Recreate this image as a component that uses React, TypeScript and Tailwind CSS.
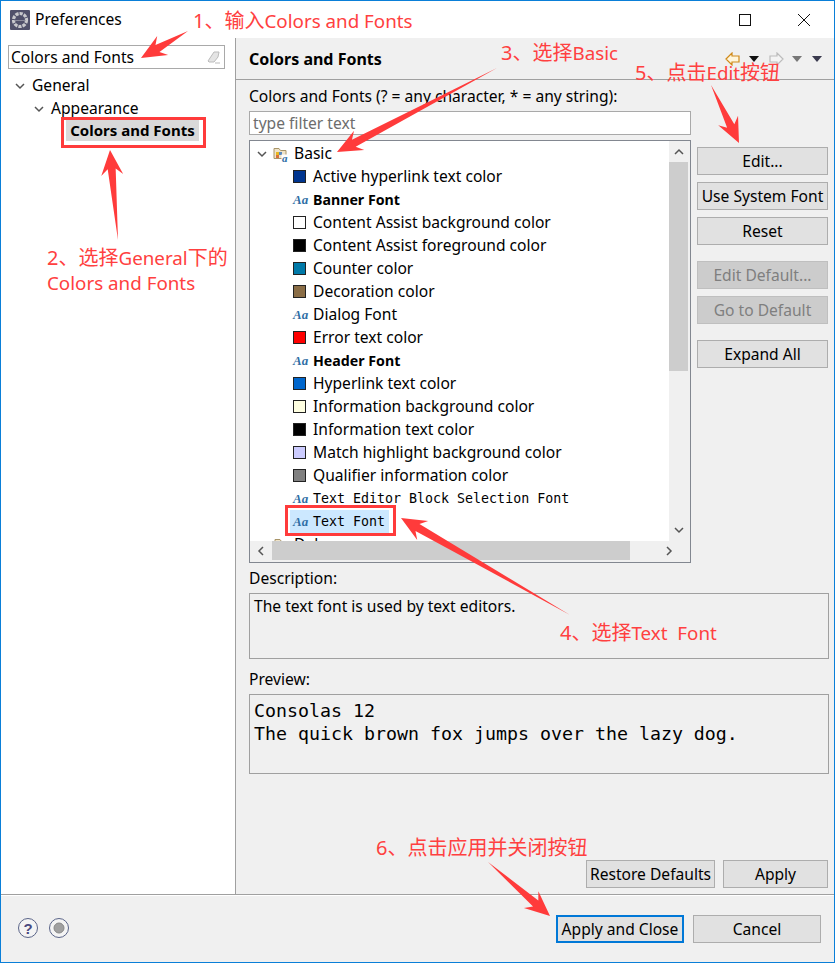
import React from 'react';

const ui = { fontFamily: '"Noto Sans", "Noto Sans CJK SC", sans-serif' };
const mono = { fontFamily: '"DejaVu Sans Mono", monospace' };

// tapered red arrow used by the tutorial annotations
const arrowPoints = (x1: number, y1: number, x2: number, y2: number) => {
  const len = Math.hypot(x2 - x1, y2 - y1);
  const ux = (x2 - x1) / len;
  const uy = (y2 - y1) / len;
  const nx = -uy;
  const ny = ux;
  const at = (back: number, side: number) =>
    `${x2 - ux * back + nx * side},${y2 - uy * back + ny * side}`;
  return [`${x1},${y1}`, at(19, 4), at(25, 11), `${x2},${y2}`, at(25, -11), at(19, -4)].join(' ');
};

const arrows = [
  [188, 31, 141, 58],
  [118, 240, 110, 150],
  [497, 68, 337, 152],
  [570, 615, 401, 518],
  [711, 85, 739, 143],
  [488, 862, 550, 916],
];

const AaIcon = () => (
  <span
    className="w-[15px] shrink-0 whitespace-nowrap text-[13px] leading-none font-bold italic text-[#2f6ea5]"
    style={{ fontFamily: '"Liberation Serif", serif' }}
  >
    Aa
  </span>
);

const Swatch = ({ color }: { color: string }) => (
  <span className="mr-[2px] h-[13px] w-[13px] shrink-0 border border-[#222]" style={{ backgroundColor: color }} />
);

const Chevron = ({ size = 10 }: { size?: number }) => (
  <svg width={size} height={size} viewBox="0 0 10 10" className="shrink-0">
    <path d="M1 3l4 4 4-4" fill="none" stroke="#555" strokeWidth="1.5" />
  </svg>
);

const rows: { label: string; color?: string; bold?: boolean }[] = [
  { label: 'Active hyperlink text color', color: '#00358f' },
  { label: 'Banner Font', bold: true },
  { label: 'Content Assist background color', color: '#ffffff' },
  { label: 'Content Assist foreground color', color: '#000000' },
  { label: 'Counter color', color: '#0079a8' },
  { label: 'Decoration color', color: '#8a6d46' },
  { label: 'Dialog Font' },
  { label: 'Error text color', color: '#ff0000' },
  { label: 'Header Font', bold: true },
  { label: 'Hyperlink text color', color: '#0066cc' },
  { label: 'Information background color', color: '#ffffe1' },
  { label: 'Information text color', color: '#000000' },
  { label: 'Match highlight background color', color: '#ccccff' },
  { label: 'Qualifier information color', color: '#808080' },
];

const Btn = ({ children, disabled, className = '' }: { children: React.ReactNode; disabled?: boolean; className?: string }) => (
  <div
    className={`flex h-[28px] items-center justify-center whitespace-nowrap border pt-[2px] ${
      disabled ? 'border-[#bfbfbf] bg-[#cccccc] text-[#7f7f7f]' : 'border-[#adadad] bg-[#e1e1e1] text-black'
    } ${className}`}
  >
    {children}
  </div>
);

const FolderIcon = () => (
  <svg width="17" height="16" viewBox="0 0 17 16" className="shrink-0">
    <path d="M1 2.5h5l1.5 2H13v8H1z" fill="#efe3c8" stroke="#a89468" />
    <rect x="3" y="6" width="3" height="3" fill="#e8b820" />
    <rect x="6" y="6" width="3" height="3" fill="#5a8ac0" />
    <rect x="3" y="9" width="3" height="3" fill="#d8703a" />
    <rect x="8.5" y="8.5" width="8" height="7" fill="#ffffff" />
    <text x="9" y="15.5" fontSize="11" fontWeight="bold" fontStyle="italic" fill="#2f6ea5" fontFamily="Liberation Serif">a</text>
  </svg>
);

const Label = ({ className, children }: { className: string; children: React.ReactNode }) => (
  <div className={`absolute whitespace-pre text-[20px] leading-[26px] text-[#ff4040] ${className}`}>{children}</div>
);

const Latin = ({ children }: { children: React.ReactNode }) => <span className="text-[18.8px]">{children}</span>;

export default function App() {
  return (
    <div className="relative flex h-[963px] w-[835px] flex-col overflow-hidden border border-[#0a7fd8] bg-white text-[15.6px] text-black" style={ui}>
      {/* title bar */}
      <div className="flex h-[37px] shrink-0 items-center bg-white pl-[9px]">
        <svg width="20" height="20" viewBox="0 0 20 20">
          <rect width="20" height="20" rx="1" fill="#50506a" />
          <circle cx="10" cy="10" r="6.5" fill="none" stroke="#c8c8cc" strokeWidth="3.2" strokeDasharray="3.2 1" />
          <path d="M4.5 10.5h11" stroke="#8a8a9a" strokeWidth="1" />
        </svg>
        <span className="ml-[5px]">Preferences</span>
        <svg width="14" height="14" viewBox="0 0 14 14" className="ml-auto mr-[45px]">
          <rect x="1.5" y="1.5" width="11" height="11" fill="none" stroke="#111" strokeWidth="1" />
        </svg>
        <svg width="14" height="14" viewBox="0 0 14 14" className="mr-[23px]">
          <path d="M1 1l12 12M13 1L1 13" stroke="#111" strokeWidth="1" />
        </svg>
      </div>

      <div className="flex min-h-0 flex-1">
        {/* left tree */}
        <div className="w-[235px] shrink-0 border-r border-[#a0a0a0] bg-white pt-[7px]">
          <div className="ml-[7px] flex h-[24px] w-[217px] items-center justify-between border border-[#a9a9a9] pl-[2px] pr-[3px] pt-[2px]">
            <span>Colors and Fonts</span>
            <svg width="14" height="14" viewBox="0 0 14 14" className="mt-[-2px]">
              <path d="M1 11l6-9h5l-1 5-4 5H2z" fill="#e4e4e4" stroke="#bbbbbb" />
              <path d="M8 13h5" stroke="#bbbbbb" />
            </svg>
          </div>
          <div className="mt-[5px] flex h-[23px] items-center pl-[14px]">
            <Chevron />
            <span className="ml-[7px]">General</span>
          </div>
          <div className="flex h-[23px] items-center pl-[33px]">
            <Chevron />
            <span className="ml-[7px]">Appearance</span>
          </div>
          <div className="ml-[65px] mt-[-1px] flex h-[22px] w-[133px] items-center justify-center bg-[#d9d9d9] text-[15px] font-bold">
            Colors and Fonts
          </div>
        </div>

        {/* right pane */}
        <div className="flex min-w-0 flex-1 flex-col bg-[#f0f0f0] pb-[6px]">
          <div className="flex h-[42px] shrink-0 items-center border-b border-[#a0a0a0] pl-[13px] pr-[12px]">
            <span className="text-[16px] font-bold">Colors and Fonts</span>
            <div className="ml-auto flex items-center">
              <svg width="15" height="14" viewBox="0 0 15 14">
                <path d="M1 7l6-6v3h7v6H7v3z" fill="#fff6dc" stroke="#d08a1a" strokeWidth="1.2" />
              </svg>
              <svg width="10" height="6" viewBox="0 0 10 6" className="ml-[9px]"><path d="M0 0h10L5 6z" fill="#111" /></svg>
              <svg width="15" height="14" viewBox="0 0 15 14" className="ml-[10px]">
                <path d="M14 7L8 1v3H1v6h7v3z" fill="#f4f4f4" stroke="#bcbcbc" strokeWidth="1.2" />
              </svg>
              <svg width="10" height="6" viewBox="0 0 10 6" className="ml-[8px]"><path d="M0 0h10L5 6z" fill="#777" /></svg>
              <svg width="10" height="6" viewBox="0 0 10 6" className="ml-[10px]"><path d="M0 0h10L5 6z" fill="#3a3a4e" /></svg>
            </div>
          </div>

          <div className="flex min-h-0 flex-1 flex-col pl-[13px] pr-[5px]">
            <div className="mt-[5px] flex h-[22px] items-center pt-[2px]">Colors and Fonts (? = any character, * = any string):</div>
            <div className="mt-[4px] flex h-[24px] w-[442px] items-center border border-[#a9a9a9] bg-white pl-[3px] pt-[2px] text-[#6d6d6d]">
              type filter text
            </div>

            <div className="mt-[5px] flex">
              {/* colours and fonts tree */}
              <div className="flex h-[423px] w-[442px] shrink-0 flex-col border border-[#828790] bg-white">
                <div className="flex h-[400px] min-h-0">
                  <div className="min-w-0 flex-1 overflow-hidden pt-[1px]">
                    <div className="flex h-[23px] items-center pl-[7px]">
                      <Chevron />
                      <span className="ml-[6px] flex"><FolderIcon /></span>
                      <span className="ml-[4px]">Basic</span>
                    </div>
                    {rows.map((row) => (
                      <div key={row.label} className="flex h-[23px] items-center pl-[43px]">
                        {row.color ? <Swatch color={row.color} /> : <AaIcon />}
                        <span className={`ml-[5px] whitespace-nowrap ${row.bold ? 'text-[14.2px] font-bold' : ''}`}>{row.label}</span>
                      </div>
                    ))}
                    <div className="flex h-[23px] items-center pl-[43px]">
                      <AaIcon />
                      <span className="ml-[5px] whitespace-nowrap text-[13.3px]" style={mono}>Text Editor Block Selection Font</span>
                    </div>
                    <div className="flex h-[23px] items-center pl-[40px]">
                      <div className="flex h-full items-center bg-[#cce8ff] pl-[3px] pr-[4px]">
                        <AaIcon />
                        <span className="ml-[5px] whitespace-nowrap text-[13.3px]" style={mono}>Text Font</span>
                      </div>
                    </div>
                    <div className="flex h-[23px] items-center pl-[24px]">
                      <FolderIcon />
                      <span className="ml-[3px]">Debug</span>
                    </div>
                  </div>
                  <div className="flex w-[21px] shrink-0 flex-col bg-[#f0f0f0] pr-[2px]">
                    <div className="flex h-[21px] items-center justify-center"><svg width="10" height="10" viewBox="0 0 10 10"><path d="M1 7l4-4 4 4" fill="none" stroke="#555" strokeWidth="1.5" /></svg></div>
                    <div className="h-[209px] bg-[#cdcdcd]" />
                    <div className="flex flex-1 items-end justify-center pb-[6px]"><Chevron /></div>
                  </div>
                </div>
                <div className="flex h-[21px] shrink-0 bg-[#f0f0f0] pb-[2px]">
                  <div className="flex w-[22px] items-center justify-center"><svg width="10" height="10" viewBox="0 0 10 10"><path d="M7 1L3 5l4 4" fill="none" stroke="#555" strokeWidth="1.5" /></svg></div>
                  <div className="w-[358px] bg-[#cdcdcd]" />
                  <div className="flex flex-1 items-center justify-center pl-[17px]"><svg width="10" height="10" viewBox="0 0 10 10"><path d="M3 1l4 4-4 4" fill="none" stroke="#555" strokeWidth="1.5" /></svg></div>
                </div>
              </div>

              <div className="ml-[6px] flex w-[131px] shrink-0 flex-col pt-[7px]">
                <Btn>Edit...</Btn>
                <Btn className="mt-[7px]">Use System Font</Btn>
                <Btn className="mt-[7px]">Reset</Btn>
                <Btn disabled className="mt-[16px]">Edit Default...</Btn>
                <Btn disabled className="mt-[7px]">Go to Default</Btn>
                <Btn className="mt-[16px]">Expand All</Btn>
              </div>
            </div>

            <div className="mt-[5px] flex h-[20px] items-center pt-[2px]">Description:</div>
            <div className="mt-[5px] h-[66px] border border-[#a0a0a0] px-[4px] pt-[1px]">The text font is used by text editors.</div>
            <div className="mt-[10px] flex h-[20px] items-center pt-[2px]">Preview:</div>
            <div className="mt-[5px] h-[80px] border border-[#a0a0a0] px-[4px] pt-[4px] text-[18.27px] leading-[23px]" style={mono}>
              <div>Consolas 12</div>
              <div>The quick brown fox jumps over the lazy dog.</div>
            </div>

            <div className="mt-auto flex justify-end pr-[1px]">
              <Btn className="w-[129px]">Restore Defaults</Btn>
              <Btn className="ml-[8px] w-[105px]">Apply</Btn>
            </div>
          </div>
        </div>
      </div>

      {/* footer */}
      <div className="flex h-[68px] shrink-0 items-center border-t border-[#a0a0a0] bg-[#f0f0f0] pl-[17px] pr-[13px] shadow-[inset_0_1px_0_#ffffff]">
        <svg width="20" height="20" viewBox="0 0 20 20" className="mb-[2px]">
          <circle cx="10" cy="10" r="9.5" fill="#f4f4f4" stroke="#5a6488" />
          <text x="10" y="15.5" textAnchor="middle" fontSize="15" fontWeight="bold" fill="#4a4a80" fontFamily="Liberation Sans">?</text>
        </svg>
        <svg width="20" height="20" viewBox="0 0 20 20" className="mb-[2px] ml-[11px]">
          <circle cx="10" cy="10" r="9.5" fill="#f4f4f4" stroke="#5a6488" />
          <circle cx="10" cy="10" r="5" fill="#a0a0a0" stroke="#888" />
        </svg>
        <div className="ml-auto flex">
          <Btn className="w-[128px] border-2 !border-[#0078d7]">Apply and Close</Btn>
          <Btn className="ml-[9px] w-[128px]">Cancel</Btn>
        </div>
      </div>

      {/* tutorial annotations over the dialog */}
      <svg width="835" height="963" viewBox="0 0 835 963" className="pointer-events-none absolute left-[-1px] top-[-1px]">
        {arrows.map(([x1, y1, x2, y2]) => (
          <polygon key={`${x1}-${y1}`} points={arrowPoints(x1, y1, x2, y2)} fill="#ff3b3b" />
        ))}
      </svg>
      <div className="pointer-events-none absolute left-[60px] top-[116px] h-[31px] w-[145px] border-[3px] border-[#ff3b3b]" />
      <div className="pointer-events-none absolute left-[284px] top-[504px] h-[31px] w-[111px] border-[3px] border-[#ff3b3b]" />
      <Label className="left-[192px] top-[7px]">1、输入<Latin>Colors and Fonts</Latin></Label>
      <Label className="left-[46px] top-[244px]">2、选择<Latin>General</Latin>下的</Label>
      <Label className="left-[46px] top-[269px]"><Latin>Colors and Fonts</Latin></Label>
      <Label className="left-[500px] top-[39px]">3、选择<Latin>Basic</Latin></Label>
      <Label className="left-[559px] top-[619px]">4、选择<Latin>Text  Font</Latin></Label>
      <Label className="left-[634px] top-[59px]">5、点击<Latin>Edit</Latin>按钮</Label>
      <Label className="left-[375px] top-[834px]">6、点击应用并关闭按钮</Label>
    </div>
  );
}
